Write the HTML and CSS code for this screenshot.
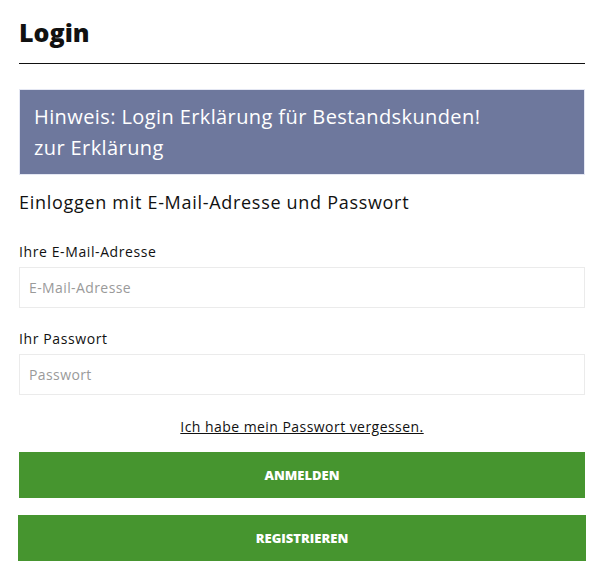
FILE: index.html
```html
<!DOCTYPE html>
<html lang="de">
<head>
  <meta charset="UTF-8" />
  <meta name="viewport" content="width=device-width, initial-scale=1.0" />
  <title>Login</title>
  <link rel="stylesheet" href="styles.css">
</head>
<body>
  <div class="login">
    <h1 class="login-title">Login</h1>
    <div class="notice">
      Hinweis: Login Erklärung für Bestandskunden!<br>
      <a href="#">zur Erklärung</a>
    </div>
    <h2 class="login-sub">Einloggen mit E-Mail-Adresse und Passwort</h2>
    <form class="login-form">
      <label for="email">Ihre E-Mail-Adresse</label>
      <input id="email" type="email" placeholder="E-Mail-Adresse">
      <label for="password">Ihr Passwort</label>
      <input id="password" type="password" placeholder="Passwort">
      <a class="forgot" href="#">Ich habe mein Passwort vergessen.</a>
      <button type="submit" class="btn">Anmelden</button>
      <button type="button" class="btn btn-wide">Registrieren</button>
    </form>
  </div>
</body>
</html>
```

FILE: styles.css
```css
body {
  margin: 0;
  font-family: "Open Sans", Arial, sans-serif;
  background: #fff;
  color: #111;
}
.login {
  padding: 13px 13px 20px 19px;
}
.login-title {
  font-size: 25px;
  font-weight: 800;
  margin: 0;
  padding-bottom: 12px;
  line-height: 38px;
  border-bottom: 1px solid #111;
}
.notice {
  margin-top: 25px;
  background: #6e789d;
  border: 1px solid #e4e7f3;
  color: #fff;
  font-size: 20px;
  letter-spacing: 0.4px;
  line-height: 31px;
  padding: 11px 14px 11px;
}
.notice a {
  color: #fff;
  text-decoration: none;
}
.login-sub {
  font-size: 18px;
  font-weight: 400;
  letter-spacing: 0.7px;
  margin: 14px 0 6px;
  line-height: 26px;
}
.login-form {
  display: flex;
  flex-direction: column;
}
.login-form label {
  font-size: 14px;
  letter-spacing: 0.6px;
  margin-top: 21px;
  line-height: 20px;
  margin-bottom: 5px;
}
.login-form input {
  height: 41px;
  box-sizing: border-box;
  border: 1px solid #ebebeb;
  padding: 0 9px;
  font-family: inherit;
  font-size: 14px;
  letter-spacing: 0.4px;
  color: #111;
  outline: none;
}
.login-form input::placeholder {
  color: #9a9a9a;
}
.forgot {
  align-self: center;
  margin-top: 21px;
  font-size: 14px;
  letter-spacing: 0.45px;
  color: #111;
  line-height: 22px;
}
.btn {
  height: 46px;
  border: none;
  background: #46952f;
  color: #fff;
  font-family: inherit;
  font-weight: 800;
  font-size: 13px;
  text-transform: uppercase;
  margin-top: 14px;
  cursor: pointer;
}
.btn-wide {
  margin: 17px -1px 0;
}
```
